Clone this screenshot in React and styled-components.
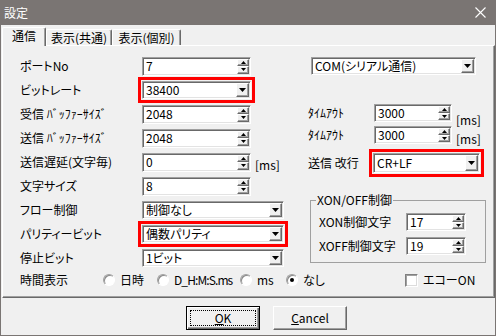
import React from "react";
import styled, { createGlobalStyle, css } from "styled-components";

const GlobalStyle = createGlobalStyle`
  * { box-sizing: border-box; }
  html, body { margin: 0; padding: 0; background: #f0f0f0; }
  body {
    font-family: "Noto Sans CJK JP", "Noto Sans", sans-serif;
    font-size: 12px;
    font-feature-settings: "palt";
    color: #000;
  }
`;

const Window = styled.div`
  width: 496px;
  height: 336px;
  display: flex;
  flex-direction: column;
  background: #f0f0f0;
  border: 1px solid #7a7573;
  border-top: none;
  overflow: hidden;
`;

const TitleBar = styled.div`
  height: 25px;
  flex: none;
  margin: 0 -1px;
  background: #7a7573;
  color: #fff;
  display: flex;
  align-items: center;
  justify-content: space-between;
  padding: 0 10px 0 4px;
  line-height: 14px;
`;

const TabStrip = styled.div`
  height: 20px;
  flex: none;
  display: flex;
  align-items: flex-end;
  padding-left: 1px;
`;

const Tab = styled.div`
  position: relative;
  z-index: ${(p) => (p.$active ? 2 : 1)};
  width: ${(p) => p.$w}px;
  height: ${(p) => (p.$active ? 19 : 16)}px;
  margin-bottom: ${(p) => (p.$active ? -1 : 0)}px;
  padding-bottom: ${(p) => (p.$active ? 2 : 0)}px;
  background: #f0f0f0;
  border-top: 1px solid #fff;
  border-left: 1px solid #fff;
  border-right: 1px solid #696969;
  border-radius: 2px 2px 0 0;
  box-shadow: inset -1px 0 0 #a0a0a0;
  display: flex;
  align-items: center;
  justify-content: center;
  line-height: 14px;
  white-space: nowrap;
`;

const Panel = styled.div`
  position: relative;
  z-index: 1;
  height: 253px;
  flex: none;
  margin-left: 1px;
  border: 1px solid;
  border-color: #fff #696969 #696969 #fff;
  box-shadow: inset -1px -1px 0 #a0a0a0;
  padding: 8px 0 0 17px;
`;

const Columns = styled.div`
  display: grid;
  grid-template-columns: 288px 180px;
  align-items: start;
`;

const Column = styled.div`
  display: flex;
  flex-direction: column;
`;

const Row = styled.div`
  display: flex;
  align-items: center;
  height: ${(p) => p.$h ?? 24}px;
  margin-top: ${(p) => p.$mt ?? 0}px;
`;

const Label = styled.span`
  flex: none;
  width: ${(p) => p.$w}px;
  line-height: 14px;
  white-space: pre;
`;

const Unit = styled.span`
  align-self: flex-end;
  margin-left: 4px;
  margin-bottom: ${(p) => p.$mb ?? 0}px;
  line-height: 14px;
`;

const sunken = css`
  background: #fff;
  border: 1px solid;
  border-color: #a0a0a0 #fff #fff #a0a0a0;
  box-shadow: inset 1px 1px 0 #696969, inset -1px -1px 0 #e3e3e3;
`;

const SpinBox = styled.div`
  ${sunken}
  flex: none;
  display: flex;
  align-items: stretch;
  width: ${(p) => p.$w}px;
  height: ${(p) => p.$h ?? 19}px;
  margin-left: ${(p) => p.$ml ?? 0}px;
  padding: 1px;
`;

const ComboBox = styled.div`
  ${sunken}
  flex: none;
  display: flex;
  align-items: stretch;
  width: ${(p) => p.$w}px;
  height: ${(p) => p.$h ?? 18}px;
  margin-left: ${(p) => p.$ml ?? 0}px;
  padding: 1px;
  ${(p) =>
    p.$marked &&
    css`
      outline: 3px solid #ff0000;
      outline-offset: 1px;
    `}
`;

const Value = styled.span`
  flex: 1;
  display: flex;
  align-items: center;
  padding-left: 2px;
  line-height: 12px;
  white-space: nowrap;
`;

const SpinCol = styled.div`
  flex: none;
  width: 12px;
  display: flex;
  flex-direction: column;
`;

const RaisedBtn = styled.div`
  flex: ${(p) => (p.$grow ? 1 : "none")};
  width: ${(p) => (p.$w ? `${p.$w}px` : "auto")};
  display: flex;
  align-items: center;
  justify-content: center;
  background: #f0f0f0;
  border: 1px solid;
  border-color: #fff #696969 #696969 #fff;
  box-shadow: inset -1px -1px 0 #a0a0a0;
`;

const Group = styled.fieldset`
  margin: 18px 0 0 2px;
  width: 176px;
  padding: 3px 0 4px 8px;
  border: 1px solid #a0a0a0;
  min-width: 0;
`;

const Legend = styled.legend`
  padding: 0 1px;
  margin-left: -3px;
  line-height: 14px;
`;

const TimeRow = styled.div`
  display: flex;
  align-items: center;
  height: 20px;
`;

const Option = styled.label`
  flex: none;
  width: ${(p) => (p.$w ? `${p.$w}px` : "auto")};
  display: flex;
  align-items: center;
  gap: 5px;
  line-height: 14px;
  white-space: nowrap;
`;

const OptionText = styled.span`
  letter-spacing: ${(p) => p.$ls ?? 0}px;
`;

const RadioDot = styled.span`
  flex: none;
  width: 12px;
  height: 12px;
  border-radius: 50%;
  background: #fff;
  border: 1px solid;
  border-color: #a0a0a0 #fff #fff #a0a0a0;
  box-shadow: inset 1px 1px 0 #8a8a8a;
  display: flex;
  align-items: center;
  justify-content: center;
  &::after {
    content: "";
    width: 4px;
    height: 4px;
    border-radius: 50%;
    background: ${(p) => (p.$checked ? "#000" : "transparent")};
  }
`;

const CheckBox = styled.span`
  flex: none;
  width: 13px;
  height: 13px;
  background: #fff;
  border: 1px solid;
  border-color: #808080 #fff #fff #808080;
  box-shadow: inset 1px 1px 0 #a0a0a0, inset -1px -1px 0 #dcdcdc;
`;

const Footer = styled.div`
  flex: 1;
  display: flex;
  align-items: flex-start;
  gap: 13px;
  padding: 8px 0 0 185px;
`;

const Button = styled.div`
  width: 74px;
  height: 24px;
  display: flex;
  padding: 3px;
  background: #f0f0f0;
  border: 1px solid;
  border-color: ${(p) => (p.$default ? "#000" : "#fff #696969 #696969 #fff")};
  box-shadow: ${(p) =>
    p.$default
      ? "inset 1px 1px 0 #fff, inset -1px -1px 0 #696969, inset -2px -2px 0 #a0a0a0"
      : "inset -1px -1px 0 #a0a0a0"};
`;

const FocusRing = styled.span`
  flex: 1;
  display: flex;
  align-items: center;
  justify-content: center;
  border: 1px dotted ${(p) => (p.$on ? "#000" : "transparent")};
  line-height: 14px;
`;

const UpArrow = () => (
  <svg width="5" height="3" viewBox="0 0 5 3">
    <polygon points="2.5,0 5,3 0,3" fill="#000" />
  </svg>
);
const DownArrow = ({ w = 5, h = 3 }) => (
  <svg width={w} height={h} viewBox={`0 0 ${w} ${h}`}>
    <polygon points={`0,0 ${w},0 ${w / 2},${h}`} fill="#000" />
  </svg>
);

const Spin = ({ value, w, h, ml }) => (
  <SpinBox $w={w} $h={h} $ml={ml}>
    <Value>{value}</Value>
    <SpinCol>
      <RaisedBtn $grow>
        <UpArrow />
      </RaisedBtn>
      <RaisedBtn $grow>
        <DownArrow />
      </RaisedBtn>
    </SpinCol>
  </SpinBox>
);

const Combo = ({ value, w, h, ml, marked }) => (
  <ComboBox $w={w} $h={h} $ml={ml} $marked={marked}>
    <Value>{value}</Value>
    <RaisedBtn $w={13}>
      <DownArrow w={7} h={4} />
    </RaisedBtn>
  </ComboBox>
);

const CloseIcon = () => (
  <svg width="11" height="11" viewBox="0 0 11 11">
    <path d="M0.5 0.5 L10.5 10.5 M10.5 0.5 L0.5 10.5" stroke="#fff" strokeWidth="1.1" />
  </svg>
);

export default function App() {
  return (
    <>
      <GlobalStyle />
      <Window>
        <TitleBar>
          <span>設定</span>
          <CloseIcon />
        </TitleBar>
        <TabStrip>
          <Tab $active $w={44}>通信</Tab>
          <Tab $w={66}>表示(共通)</Tab>
          <Tab $w={69}>表示(個別)</Tab>
        </TabStrip>
        <Panel>
          <Columns>
            <Column>
              <Row>
                <Label $w={122}>ポートNo</Label>
                <Spin value="7" w={109} />
              </Row>
              <Row>
                <Label $w={122}>ビットレート</Label>
                <Combo value="38400" w={109} marked />
              </Row>
              <Row>
                <Label $w={122}>受信 ﾊﾞｯﾌｧｰｻｲｽﾞ</Label>
                <Spin value="2048" w={109} />
              </Row>
              <Row>
                <Label $w={122}>送信 ﾊﾞｯﾌｧｰｻｲｽﾞ</Label>
                <Spin value="2048" w={109} />
              </Row>
              <Row>
                <Label $w={122}>送信遅延(文字毎)</Label>
                <Spin value="0" w={109} />
                <Unit $mb={2}>[ms]</Unit>
              </Row>
              <Row>
                <Label $w={122}>文字サイズ</Label>
                <Spin value="8" w={109} />
              </Row>
              <Row>
                <Label $w={122}>フロー制御</Label>
                <Combo value="制御なし" w={142} />
              </Row>
              <Row>
                <Label $w={122}>パリティービット</Label>
                <Combo value="偶数パリティ" w={142} marked />
              </Row>
              <Row>
                <Label $w={122}>停止ビット</Label>
                <Combo value="1ビット" w={142} />
              </Row>
            </Column>
            <Column>
              <Row>
                <Combo value="COM(シリアル通信)" w={165} ml={3} />
              </Row>
              <Row />
              <Row $h={22}>
                <Label $w={66}>ﾀｲﾑｱｳﾄ</Label>
                <Spin value="3000" w={78} h={18} />
                <Unit $mb={-3}>[ms]</Unit>
              </Row>
              <Row $h={21}>
                <Label $w={66}>ﾀｲﾑｱｳﾄ</Label>
                <Spin value="3000" w={78} h={18} />
                <Unit $mb={-1}>[ms]</Unit>
              </Row>
              <Row $mt={6}>
                <Label $w={65}>送信 改行</Label>
                <Combo value="CR+LF" w={107} h={20} marked />
              </Row>
              <Group>
                <Legend>XON/OFF制御</Legend>
                <Row>
                  <Label $w={87}>XON制御文字</Label>
                  <Spin value="17" w={60} h={18} />
                </Row>
                <Row>
                  <Label $w={87}>XOFF制御文字</Label>
                  <Spin value="19" w={60} h={18} />
                </Row>
              </Group>
            </Column>
          </Columns>
          <TimeRow>
            <Label $w={83}>時間表示</Label>
            <Option $w={54}>
              <RadioDot />
              <OptionText>日時</OptionText>
            </Option>
            <Option $w={83}>
              <RadioDot />
              <OptionText $ls={-0.9}>D_H:M:S.ms</OptionText>
            </Option>
            <Option $w={46}>
              <RadioDot />
              <OptionText>ms</OptionText>
            </Option>
            <Option $w={119}>
              <RadioDot $checked />
              <OptionText>なし</OptionText>
            </Option>
            <Option>
              <CheckBox />
              <OptionText>エコーON</OptionText>
            </Option>
          </TimeRow>
        </Panel>
        <Footer>
          <Button $default>
            <FocusRing $on>
              <u>O</u>K
            </FocusRing>
          </Button>
          <Button>
            <FocusRing>
              <u>C</u>ancel
            </FocusRing>
          </Button>
        </Footer>
      </Window>
    </>
  );
}
